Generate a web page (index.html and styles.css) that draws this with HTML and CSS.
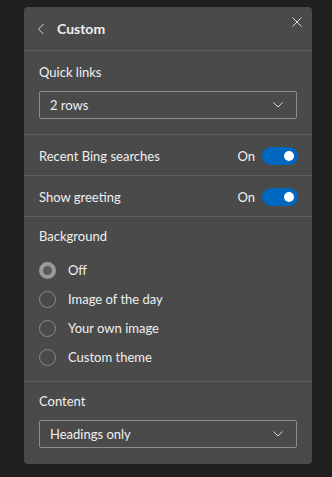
FILE: index.html
```html
<!DOCTYPE html>
<html lang="en">
<head>
    <meta charset="UTF-8">
    <meta name="viewport" content="width=device-width, initial-scale=1.0">
    <title>Custom</title>
    <link rel="stylesheet" href="styles.css">
</head>
<body>
    <div class="panel">
        <div class="header">
            <svg class="back" width="8" height="12" viewBox="0 0 8 12"><path d="M6.5 1 L1.5 6 L6.5 11" fill="none" stroke="#d8d8d8" stroke-width="1"/></svg>
            <h1>Custom</h1>
            <svg class="close" width="10" height="10" viewBox="0 0 10 10"><path d="M0.5 0.5 L9.5 9.5 M9.5 0.5 L0.5 9.5" fill="none" stroke="#d8d8d8" stroke-width="1"/></svg>
        </div>

        <div class="section links">
            <div class="label">Quick links</div>
            <div class="select">
                <span>2 rows</span>
                <svg width="10" height="6" viewBox="0 0 10 6"><path d="M0.5 0.5 L5 5 L9.5 0.5" fill="none" stroke="#d8d8d8" stroke-width="1"/></svg>
            </div>
        </div>

        <div class="row">
            <span>Recent Bing searches</span>
            <div class="state">On <span class="toggle"></span></div>
        </div>
        <div class="row">
            <span>Show greeting</span>
            <div class="state">On <span class="toggle"></span></div>
        </div>

        <div class="section background">
            <div class="label">Background</div>
            <div class="radios">
                <div class="radio checked"><span class="dot"></span>Off</div>
                <div class="radio"><span class="dot"></span>Image of the day</div>
                <div class="radio"><span class="dot"></span>Your own image</div>
                <div class="radio"><span class="dot"></span>Custom theme</div>
            </div>
        </div>

        <div class="section content">
            <div class="label">Content</div>
            <div class="select">
                <span>Headings only</span>
                <svg width="10" height="6" viewBox="0 0 10 6"><path d="M0.5 0.5 L5 5 L9.5 0.5" fill="none" stroke="#d8d8d8" stroke-width="1"/></svg>
            </div>
        </div>
    </div>
</body>
</html>
```

FILE: styles.css
```css
:root {
    --background: #1f1f1f;
    --surface: #4a4a4a;
    --divider: #5e5e5e;
    --text: #f0f0f0;
    --accent: #0067c0;
}

body {
    font-family: 'Lato', sans-serif;
    font-size: 13px;
    margin: 0;
    background: var(--background);
    color: var(--text);
    height: 477px;
}

.panel {
    position: relative;
    margin: 7px 0 0 24px;
    width: 288px;
    height: 457px;
    background: var(--surface);
    border-radius: 4px;
}

.header {
    display: flex;
    align-items: center;
    height: 44px;
    padding-left: 13px;
    border-bottom: 1px solid var(--divider);
    box-sizing: border-box;
}

.header h1 {
    font-size: 14px;
    font-weight: 700;
    margin: 0 0 0 12px;
    line-height: 20px;
}

.back {
    margin-top: 1px;
}

.close {
    position: absolute;
    top: 10px;
    right: 10px;
}

.section {
    padding: 12px 15px 15px;
    border-bottom: 1px solid var(--divider);
}

.section.background {
    padding-top: 10px;
}

.section.content {
    padding-top: 10px;
    border-bottom: none;
}

.label {
    line-height: 18px;
}

.select {
    display: flex;
    justify-content: space-between;
    align-items: center;
    height: 28px;
    margin-top: 10px;
    padding: 0 13px 0 10px;
    border: 1px solid #8c8c8c;
    border-radius: 2px;
    box-sizing: border-box;
}

.row {
    display: flex;
    justify-content: space-between;
    align-items: center;
    height: 41px;
    padding: 1px 14px 0 15px;
    border-bottom: 1px solid var(--divider);
    box-sizing: border-box;
}

.state {
    display: flex;
    align-items: center;
    gap: 7px;
}

.toggle {
    position: relative;
    width: 36px;
    height: 18px;
    border-radius: 9px;
    background: var(--accent);
}

.toggle::after {
    content: "";
    position: absolute;
    top: 4px;
    right: 4px;
    width: 10px;
    height: 10px;
    border-radius: 50%;
    background: #fff;
}

.radios {
    display: flex;
    flex-direction: column;
    gap: 11px;
    margin-top: 16px;
}

.radio {
    display: flex;
    align-items: center;
    gap: 12px;
    height: 18px;
}

.dot {
    width: 17px;
    height: 17px;
    border: 1px solid #8a8a8a;
    border-radius: 50%;
    box-sizing: border-box;
}

.radio.checked .dot {
    border: 4px solid #9a9a9a;
    background: #5a5a5a;
}
```
